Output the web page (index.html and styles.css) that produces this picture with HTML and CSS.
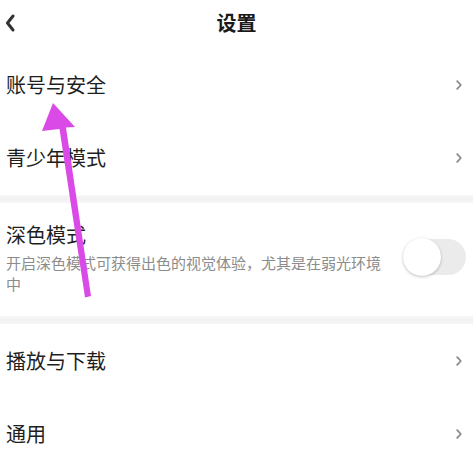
FILE: index.html
```html
<!DOCTYPE html>
<html lang="zh">
<head>
<meta charset="utf-8">
<title>设置</title>
<link rel="stylesheet" href="styles.css">
</head>
<body>
<div class="page">
  <header class="topbar">
    <div class="back">
      <svg width="10" height="18" viewBox="0 0 10 18"><polyline points="8,2 2.5,9 8,16" fill="none" stroke="#333" stroke-width="3" stroke-linecap="round" stroke-linejoin="round"/></svg>
    </div>
    <h1 class="title">设置</h1>
    <div></div>
  </header>

  <div class="row"><span class="label">账号与安全</span><svg class="chev" width="6" height="10" viewBox="0 0 6 10"><polyline points="1.2,1.2 4.8,5 1.2,8.8" fill="none" stroke="#8a8a8a" stroke-width="1.8" stroke-linecap="round" stroke-linejoin="round"/></svg></div>
  <div class="row"><span class="label">青少年模式</span><svg class="chev" width="6" height="10" viewBox="0 0 6 10"><polyline points="1.2,1.2 4.8,5 1.2,8.8" fill="none" stroke="#8a8a8a" stroke-width="1.8" stroke-linecap="round" stroke-linejoin="round"/></svg></div>

  <div class="sep"></div>

  <div class="row-tall">
    <div class="texts">
      <div class="label">深色模式</div>
      <div class="desc">开启深色模式可获得出色的视觉体验，尤其是在弱光环境中</div>
    </div>
    <div class="toggle"><div class="knob"></div></div>
  </div>

  <div class="sep sep2"></div>

  <div class="row"><span class="label">播放与下载</span><svg class="chev" width="6" height="10" viewBox="0 0 6 10"><polyline points="1.2,1.2 4.8,5 1.2,8.8" fill="none" stroke="#8a8a8a" stroke-width="1.8" stroke-linecap="round" stroke-linejoin="round"/></svg></div>
  <div class="row"><span class="label">通用</span><svg class="chev" width="6" height="10" viewBox="0 0 6 10"><polyline points="1.2,1.2 4.8,5 1.2,8.8" fill="none" stroke="#8a8a8a" stroke-width="1.8" stroke-linecap="round" stroke-linejoin="round"/></svg></div>

  <svg class="arrow" width="473" height="459" viewBox="0 0 473 459">
    <polygon points="53,103 75,127 66,127.5 91,296 85,297.5 59.5,129 42,131" fill="#d94ae6"/>
  </svg>
</div>
</body>
</html>
```

FILE: styles.css
```css
html, body {
  margin: 0;
  padding: 0;
  background: #ffffff;
}
body {
  width: 473px;
  height: 459px;
  overflow: hidden;
  font-family: "Noto Sans CJK SC", "Noto Sans", sans-serif;
  color: #1e1e1e;
}
.page {
  position: relative;
  width: 473px;
}
.topbar {
  height: 48px;
  display: grid;
  grid-template-columns: 1fr auto 1fr;
  align-items: center;
}
.back {
  padding-left: 5px;
  display: flex;
  align-items: center;
  margin-top: -2px;
}
.title {
  margin: 0;
  font-size: 20px;
  font-weight: 700;
  line-height: 28px;
  color: #1a1a1a;
  margin-top: -2px;
}
.row {
  height: 73px;
  display: flex;
  align-items: center;
  justify-content: space-between;
  padding: 0 11px 0 6px;
}
.label {
  font-size: 20px;
  line-height: 28px;
  color: #1e1e1e;
}
.chev {
  display: block;
}
.sep {
  height: 8px;
  margin-top: 1px;
  background: linear-gradient(#f7f7f7, #f1f1f1 50%, #f7f7f7);
}
.sep2 {
  margin-top: 0;
}
.row-tall {
  display: flex;
  align-items: center;
  gap: 12px;
  padding: 18px 7px 22px 6px;
}
.texts {
  flex: 1;
}
.desc {
  margin-top: 3px;
  font-size: 15px;
  line-height: 21px;
  color: #8c8c8c;
}
.toggle {
  position: relative;
  width: 63px;
  height: 36px;
  border-radius: 18px;
  background: #ebebeb;
  flex-shrink: 0;
  margin-top: -2px;
}
.knob {
  position: absolute;
  left: 0;
  top: -1px;
  width: 38px;
  height: 38px;
  border-radius: 50%;
  background: #ffffff;
  box-shadow: 0 1px 3px rgba(0, 0, 0, 0.25);
}
.arrow {
  position: absolute;
  left: 0;
  top: 0;
  pointer-events: none;
}
```
